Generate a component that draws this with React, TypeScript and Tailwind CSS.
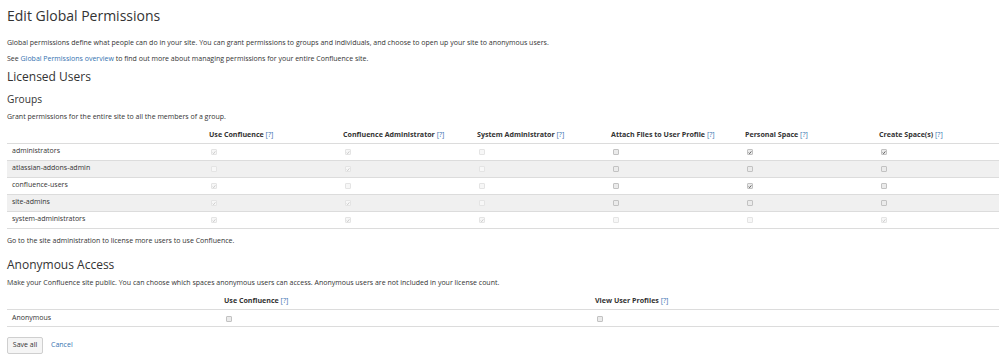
import React from 'react';

type Box = 'on' | 'off' | 'on-dis' | 'off-dis';

interface GroupRow {
  name: string;
  perms: Box[];
}

const groupColumns = [
  'Use Confluence',
  'Confluence Administrator',
  'System Administrator',
  'Attach Files to User Profile',
  'Personal Space',
  'Create Space(s)',
];

const groups: GroupRow[] = [
  { name: 'administrators', perms: ['on-dis', 'on-dis', 'off-dis', 'off', 'on', 'on'] },
  { name: 'atlassian-addons-admin', perms: ['off-dis', 'on-dis', 'off-dis', 'off', 'off', 'off'] },
  { name: 'confluence-users', perms: ['on-dis', 'off-dis', 'off-dis', 'off', 'on', 'off'] },
  { name: 'site-admins', perms: ['on-dis', 'on-dis', 'off-dis', 'off', 'off', 'off'] },
  { name: 'system-administrators', perms: ['on-dis', 'on-dis', 'on-dis', 'off-dis', 'off-dis', 'on-dis'] },
];

const Check: React.FC<{ state: Box }> = ({ state }) => {
  const disabled = state.endsWith('dis');
  const checked = state.startsWith('on');
  return (
    <span
      className={
        'ml-[2px] inline-flex h-[6px] w-[6px] items-center justify-center rounded-[1px] border align-middle ' +
        (disabled ? 'border-[#e4e4e4] bg-[#f7f7f7]' : 'border-[#c2c2c2] bg-[#ebebeb]')
      }
    >
      {checked && (
        <svg viewBox="0 0 6 6" className="h-[5px] w-[5px]">
          <path
            d="M1 3.2 L2.4 4.6 L5 1.4"
            fill="none"
            stroke={disabled ? '#bdbdbd' : '#333'}
            strokeWidth="1.1"
          />
        </svg>
      )}
    </span>
  );
};

const Help: React.FC = () => <span className="font-normal text-[#3572b0]">[?]</span>;

const App: React.FC = () => {
  return (
    <div
      className="min-h-[359px] bg-white pl-[7px] pt-[6px] text-[#333]"
      style={{ fontFamily: '"Open Sans", "Noto Sans", sans-serif' }}
    >
      {/* Title */}
      <h1 className="text-[14px] leading-[20px]">Edit Global Permissions</h1>

      <p className="mt-[12px] text-[7px] leading-[10px]">
        Global permissions define what people can do in your site. You can grant permissions to groups and individuals, and choose to open up your site to anonymous users.
      </p>
      <p className="mt-[6px] text-[7px] leading-[10px]">
        See <span className="text-[#3572b0]">Global Permissions overview</span> to find out more about managing permissions for your entire Confluence site.
      </p>

      {/* Licensed users */}
      <h2 className="mt-[5px] text-[12px] leading-[16px]">Licensed Users</h2>
      <h3 className="mt-[7px] text-[10.2px] leading-[14px]">Groups</h3>
      <p className="mt-[6px] text-[7px] leading-[10px]">Grant permissions for the entire site to all the members of a group.</p>

      <table className="mt-[4px] w-[992px] table-fixed border-collapse text-[7px]">
        <colgroup>
          <col className="w-[197px]" />
          <col className="w-[134px]" />
          <col className="w-[134px]" />
          <col className="w-[134px]" />
          <col className="w-[134px]" />
          <col className="w-[134px]" />
          <col />
        </colgroup>
        <thead>
          <tr className="h-[17px] border-b border-[#dcdcdc]">
            <th />
            {groupColumns.map(c => (
              <th key={c} className="px-[5px] text-left text-[7.1px] font-bold">
                {c} <Help />
              </th>
            ))}
          </tr>
        </thead>
        <tbody>
          {groups.map((g, i) => (
            <tr key={g.name} className={'h-[17px] border-b border-[#dcdcdc] ' + (i % 2 === 1 ? 'bg-[#f0f0f0]' : '')}>
              <td className="px-[5px]">{g.name}</td>
              {g.perms.map((p, j) => (
                <td key={j} className="px-[5px] leading-none">
                  <Check state={p} />
                </td>
              ))}
            </tr>
          ))}
        </tbody>
      </table>

      <p className="mt-[7px] text-[7px] leading-[10px]">Go to the site administration to license more users to use Confluence.</p>

      {/* Anonymous access */}
      <h2 className="mt-[11px] text-[12px] leading-[16px]">Anonymous Access</h2>
      <p className="mt-[5px] text-[7px] leading-[10px]">
        Make your Confluence site public. You can choose which spaces anonymous users can access. Anonymous users are not included in your license count.
      </p>

      <table className="mt-[5px] w-[992px] table-fixed border-collapse text-[7px]">
        <colgroup>
          <col className="w-[212px]" />
          <col className="w-[371px]" />
          <col />
        </colgroup>
        <thead>
          <tr className="h-[17px] border-b border-[#dcdcdc]">
            <th />
            <th className="px-[5px] text-left text-[7.1px] font-bold">
              Use Confluence <Help />
            </th>
            <th className="px-[5px] text-left text-[7.1px] font-bold">
              View User Profiles <Help />
            </th>
          </tr>
        </thead>
        <tbody>
          <tr className="h-[17px] border-b border-[#dcdcdc]">
            <td className="px-[5px]">Anonymous</td>
            <td className="px-[5px] leading-none">
              <Check state="off" />
            </td>
            <td className="px-[5px] leading-none">
              <Check state="off" />
            </td>
          </tr>
        </tbody>
      </table>

      <div className="mt-[10px] flex items-center gap-[8px] text-[7px]">
        <button className="h-[17px] w-[36px] rounded-[2px] border border-[#cfcfcf] bg-[#f5f5f5] text-[#333]">Save all</button>
        <span className="text-[#3572b0]">Cancel</span>
      </div>
    </div>
  );
};

export default App;
